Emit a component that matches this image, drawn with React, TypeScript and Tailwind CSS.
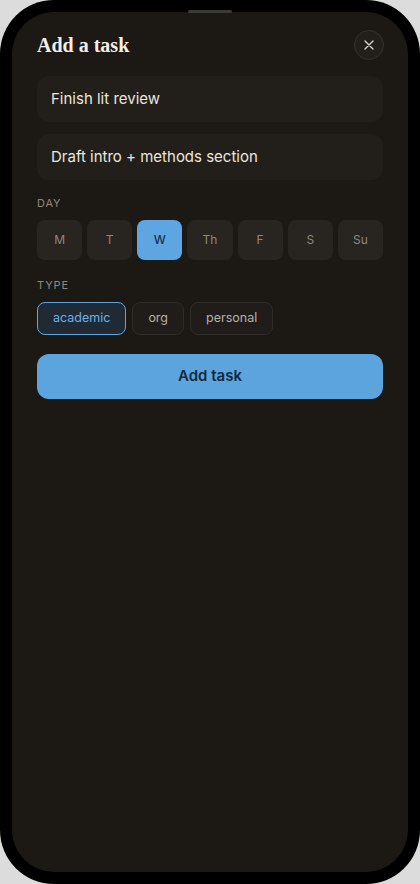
import React from 'react';

const days = ['M', 'T', 'W', 'Th', 'F', 'S', 'Su'];
const types = ['academic', 'org', 'personal'];

const sans = { fontFamily: 'Inter, "DejaVu Sans", sans-serif' };

export default function App() {
  const [day, setDay] = React.useState('W');
  const [type, setType] = React.useState('academic');

  return (
    <div className="w-[420px] h-[884px] bg-[#dcdcdc]" style={sans}>
      <div className="relative h-full rounded-[54px] bg-black p-3">
        {/* speaker pill */}
        <div className="absolute left-[188px] top-[10px] h-[3px] w-[44px] rounded-full bg-[#3a3a3a]" />

        <div className="h-full rounded-[42px] bg-[#1c1915] px-[25px] pt-[18px]">
          {/* header */}
          <div className="flex h-[30px] items-center justify-between">
            <h1
              className="text-[20px] font-bold text-[#f3efe8] leading-none"
              style={{ fontFamily: '"Liberation Serif", "DejaVu Serif", serif' }}
            >
              Add a task
            </h1>
            <button className="flex h-[30px] w-[30px] items-center justify-center rounded-full border border-[#34302b] bg-[#221f1b] -mr-[1px]">
              <svg width="12" height="12" viewBox="0 0 12 12" fill="none" stroke="#d8d2c9" strokeWidth="1.4" strokeLinecap="round">
                <path d="M2 2l8 8M10 2l-8 8" />
              </svg>
            </button>
          </div>

          {/* inputs */}
          <div className="mt-4 flex flex-col gap-3">
            <div className="flex h-[46px] items-center rounded-xl bg-[#221f1b] px-[14px] text-[15px] text-[#ebe6de]">
              Finish lit review
            </div>
            <div className="flex h-[46px] items-center rounded-xl bg-[#221f1b] px-[14px] text-[15px] text-[#ebe6de]">
              Draft intro + methods section
            </div>
          </div>

          {/* day */}
          <div className="mt-[15px] text-[11px] leading-4 uppercase tracking-[0.08em] text-[#8f877d]">Day</div>
          <div className="mt-[9px] grid grid-cols-7 gap-[5px]">
            {days.map((d) => (
              <button
                key={d}
                onClick={() => setDay(d)}
                className={
                  d === day
                    ? 'h-10 rounded-lg bg-[#5ea6e2] text-[12px] font-medium text-[#17314d]'
                    : 'h-10 rounded-lg bg-[#28241f] text-[12px] text-[#8f877d]'
                }
              >
                {d}
              </button>
            ))}
          </div>

          {/* type */}
          <div className="mt-[17px] text-[11px] leading-4 uppercase tracking-[0.08em] text-[#8f877d]">Type</div>
          <div className="mt-[9px] flex gap-[6px]">
            {types.map((t) => (
              <button
                key={t}
                onClick={() => setType(t)}
                className={
                  t === type
                    ? 'h-[33px] rounded-lg border border-[#5ea6e2] bg-[#1f2a34] px-[15px] text-[12.5px] text-[#6db0e8]'
                    : 'h-[33px] rounded-lg border border-[#2f2b26] bg-[#1f1c19] px-[15px] text-[12.5px] text-[#b8b1a7]'
                }
              >
                {t}
              </button>
            ))}
          </div>

          <button className="mt-[19px] h-[45px] w-full rounded-xl bg-[#5ca4de] text-[15px] font-semibold text-[#12283f]">
            Add task
          </button>
        </div>
      </div>
    </div>
  );
}
